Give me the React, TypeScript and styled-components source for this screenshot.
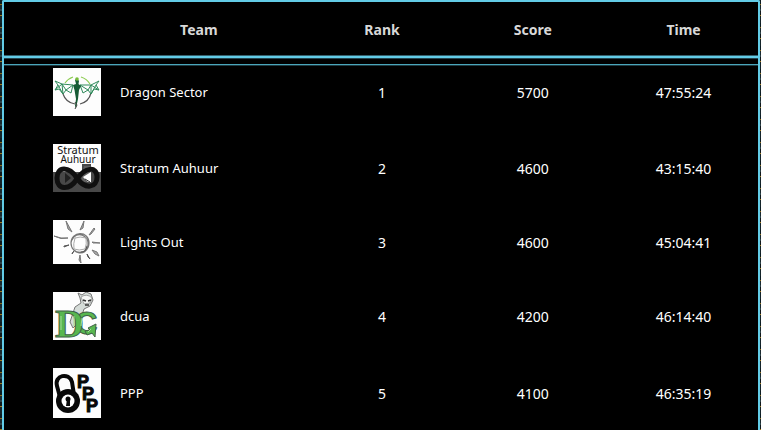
import React from "react";
import styled, { createGlobalStyle } from "styled-components";

const GlobalStyle = createGlobalStyle`
  * { box-sizing: border-box; }
  body {
    margin: 0;
    background: repeating-linear-gradient(
      180deg,
      #0c1c22 0 4px, #8a6a1c 4px 5px, #1a2a30 5px 9px, #2c4248 9px 11px,
      #10181c 11px 15px, #a07a20 15px 16px, #14242a 16px 23px
    );
    font-family: "Noto Sans", "Open Sans", sans-serif;
    color: #fff;
  }
`;

const Panel = styled.main`
  min-height: 100vh;
  margin: 0 1px 0 2px;
  border: 2px solid #62cbe6;
  border-bottom: 0;
  border-radius: 2px 2px 0 0;
  background: #000;
`;

const Table = styled.table`
  width: 100%;
  table-layout: fixed;
  border-collapse: separate;
  border-spacing: 0;
  font-size: 14px;
  line-height: 20px;
`;

const HeadCell = styled.th<{ $wide?: boolean }>`
  width: ${(p) => (p.$wide ? "40%" : "20%")};
  height: 64px;
  padding: 0 0 8px ${(p) => (p.$wide ? "88px" : "2px")};
  color: #d8d8d8;
  font-weight: 700;
  text-align: center;
  vertical-align: middle;
  background:
    linear-gradient(#35606c 1px, #62cbe6 1px 3px, #24444e 3px) 0 53px / 100% 4px no-repeat,
    linear-gradient(#4aa5ba 1px, #1c3a42 1px) 0 62px / 100% 2px no-repeat;
`;

const Cell = styled.td`
  padding: 16px 0 14px 2px;
  text-align: center;
  vertical-align: middle;
`;

const TeamCell = styled.td`
  padding: 14px 0 14px 49px;
  font-size: 13px;
`;

const Row = styled.tr`
  &:first-child > td { padding-top: 2px; }
  &:first-child > ${Cell} { padding-top: 4px; }
  &:last-child > td { padding-bottom: 12px; }
`;

const Team = styled.div`
  display: flex;
  align-items: center;
  gap: 19px;
`;

const Logo = styled.svg`
  display: block;
  flex: none;
  width: 48px;
  background: #fdfdfd;
`;

const DragonLogo = () => (
  <Logo height="48" viewBox="0 0 48 48" aria-hidden="true">
    <g fill="none">
      <path d="M12 15A16 16 0 0 1 20 9M28 9A16 16 0 0 1 37 16" stroke="#8ccc50" strokeWidth="1.2" />
      <path d="M10 26A15 15 0 0 0 22 36M27 36A15 15 0 0 0 38 25" stroke="#555" strokeWidth="1.2" />
      <path d="M2 13 9 16 20 17 18 25 13 22 10 26 6 21 2 22 5 17ZM5 17 10 26 9 16 13 22 20 17M2 22 9 16" stroke="#2f8a5b" strokeWidth="1" />
      <path d="M46 13 38 17 27 17 30 25 35 22 38 26 41 21 46 22 43 17ZM43 17 38 26 38 17 35 22 27 17M46 22 38 17" stroke="#2f8a5b" strokeWidth="1" />
    </g>
    <path d="M24 10 26 13 25.5 16 28 18 26 22 25 31 23 40 22 38 23 31 21.5 22 20 17 23 16 22 12Z" fill="#165b35" />
    <circle cx="24" cy="11" r="1.8" fill="#76bb39" />
    <path d="M22 34 24 37 22 41" stroke="#444" fill="none" />
  </Logo>
);

const StratumLogo = () => (
  <Logo height="48" viewBox="0 0 48 48" aria-hidden="true">
    <g fill="#111" fontFamily="'Noto Sans', sans-serif" textAnchor="middle">
      <text x="25" y="10" fontSize="11">Stratum</text>
      <text x="25" y="19" fontSize="10">Auhuur</text>
    </g>
    <path d="M0 28H29V20H38V28H48V48H0Z" fill="#484848" />
    <path d="M31 22H38V38H28Z" fill="#606060" />
    <path d="M24 34C16 22 4 22 4 34S16 47 24 35 44 22 44 33 32 46 24 34" fill="none" stroke="#101010" strokeWidth="5" />
    <path d="M12 29 18 34 12 39Z" fill="#202020" />
    <path d="M38 28V38H35L30 33Z" fill="#fff" />
    <path d="M32 35 37 38" stroke="#333" />
  </Logo>
);

const SunLogo = () => (
  <Logo height="44" viewBox="0 0 48 44" aria-hidden="true">
    <g fill="none" stroke="#777" strokeWidth="1.2" strokeLinecap="round">
      <path d="M18 23C18 11 36 10 36 23S18 35 18 23ZM19 20C23 10 37 15 35 26S19 34 18 24" />
      <path d="M22 18Q27 16 33 18 34 24 32 29 26 31 21 29 20 24 22 18" stroke="#aaa" strokeWidth="1" />
      <path d="M28 32Q33 32 34 26" stroke="#555" />
    </g>
    <g fill="#aaa" stroke="#777" strokeWidth="1" strokeLinejoin="round">
      <path d="M13 1 19 12 15 9ZM31 1 27 10 30 8ZM41 8 36 15 38 14 42 9ZM1 16Q8 19 15 18 8 20 1 16ZM39 22 47 23 40 23ZM39 30 44 32 46 36 42 34ZM27 35 28 43 26 40Z" />
      <path d="M11 26 16 25 11 27ZM19 34 21 31 20 32ZM34 34 37 39 35 37Z" stroke="#555" />
    </g>
  </Logo>
);

const DcLogo = () => (
  <Logo height="48" viewBox="0 0 48 48" aria-hidden="true">
    <path d="M22 15 28 11 27 6 25 1 29 3 33 0 38 2 40 8 37 14 31 17 27 29 20 36 17 30Z" fill="#d5dcd8" stroke="#777" />
    <path d="M28 5Q34 1 39 6L37 11 31 12Z" fill="#f6f8f6" stroke="#888" strokeWidth=".7" />
    <path d="M30 8 33 9M35 9 38 8M32 13H36" stroke="#333" strokeWidth="1.6" />
    <g fill="#58b750" stroke="#426247" strokeWidth="1" fontWeight="700">
      <text x="22" y="42" fontSize="31" fontFamily="'Liberation Sans', Arial, sans-serif">C</text>
      <text x="2" y="45" fontSize="40" fontFamily="'Liberation Serif', serif" textLength={undefined}>D</text>
    </g>
    <path d="M35 36 43 32 42 45 39 41 34 43 32 39 37 38Z" fill="#58b750" stroke="#426247" />
    <path d="M8 24V38M21 24V34M29 26 28 34M38 37 35 40" stroke="#a2dd94" fill="none" />
  </Logo>
);

const PppLogo = () => (
  <Logo height="50" viewBox="0 0 48 50" aria-hidden="true">
    <path d="M7 29 4 18C1 7 16 4 19 14L21 27" fill="none" stroke="#080808" strokeWidth="4" />
    <circle cx="15" cy="33" r="12" fill="#080808" />
    <circle cx="15" cy="33" r="6.5" fill="#fff" />
    <circle cx="15" cy="31" r="2.5" fill="#080808" />
    <path d="M14 31H17V38H13Z" fill="#080808" />
    <g fill="#080808" stroke="#080808" strokeWidth="1" fontFamily="'Liberation Sans', Arial, sans-serif" fontWeight="700" fontSize="18">
      <text x="24" y="20">P</text>
      <text x="29" y="32">P</text>
      <text x="33" y="44">P</text>
    </g>
  </Logo>
);

const teams = [
  { name: "Dragon Sector", score: 5700, time: "47:55:24", Mark: DragonLogo },
  { name: "Stratum Auhuur", score: 4600, time: "43:15:40", Mark: StratumLogo },
  { name: "Lights Out", score: 4600, time: "45:04:41", Mark: SunLogo },
  { name: "dcua", score: 4200, time: "46:14:40", Mark: DcLogo },
  { name: "PPP", score: 4100, time: "46:35:19", Mark: PppLogo },
];

export default function App() {
  return (
    <>
      <GlobalStyle />
      <Panel>
        <Table>
          <thead>
            <tr>
              <HeadCell scope="col" $wide>Team</HeadCell>
              <HeadCell scope="col">Rank</HeadCell>
              <HeadCell scope="col">Score</HeadCell>
              <HeadCell scope="col">Time</HeadCell>
            </tr>
          </thead>
          <tbody>
            {teams.map(({ name, score, time, Mark }, i) => (
              <Row key={name}>
                <TeamCell>
                  <Team>
                    <Mark />
                    <span>{name}</span>
                  </Team>
                </TeamCell>
                <Cell>{i + 1}</Cell>
                <Cell>{score}</Cell>
                <Cell>{time}</Cell>
              </Row>
            ))}
          </tbody>
        </Table>
      </Panel>
    </>
  );
}
